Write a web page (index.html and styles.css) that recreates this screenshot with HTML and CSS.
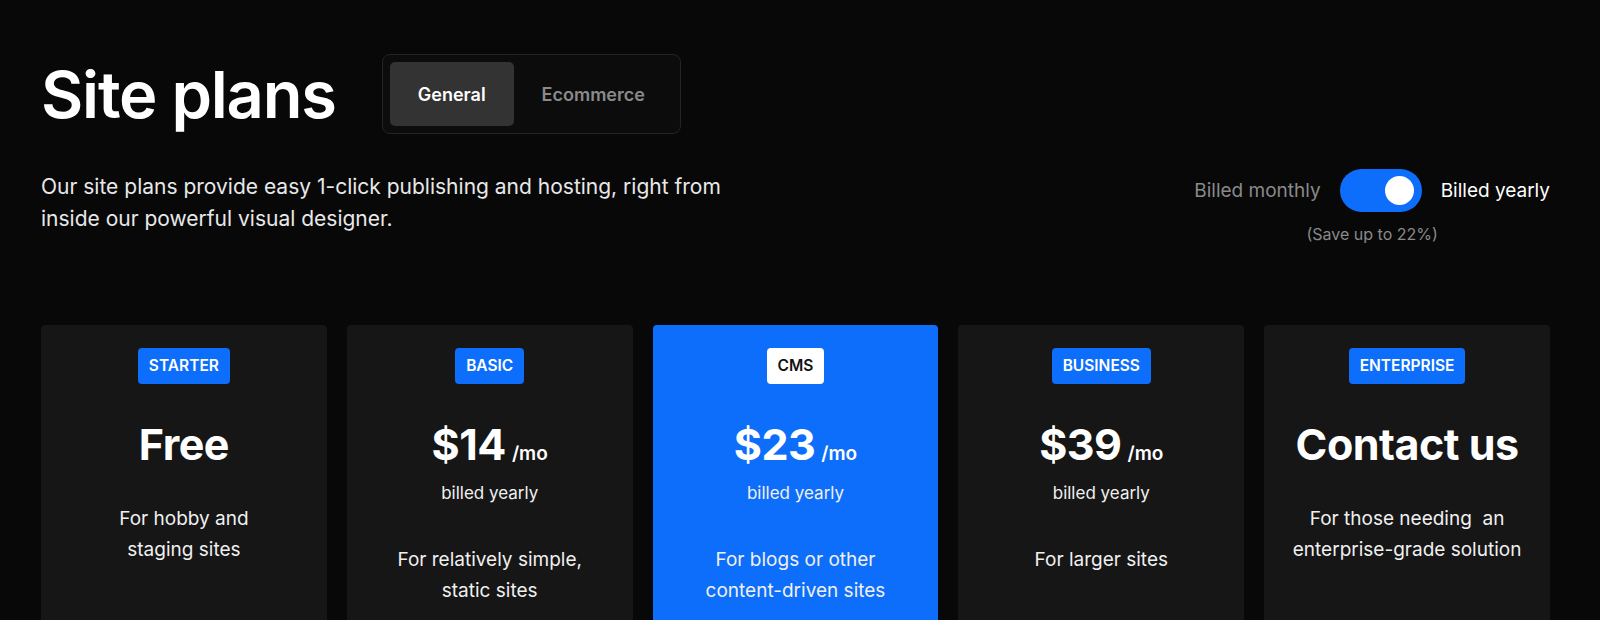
FILE: index.html
```html
<!DOCTYPE html>
<html lang="en">
<head>
<meta charset="utf-8">
<title>Site plans</title>
<link rel="stylesheet" href="styles.css">
</head>
<body>
<main class="page">
  <header class="top">
    <div class="top-left">
      <div class="title-row">
        <h1 class="title">Site plans</h1>
        <div class="tabs">
          <button class="tab tab-active">General</button>
          <button class="tab">Ecommerce</button>
        </div>
      </div>
      <p class="lead">Our site plans provide easy 1-click publishing and hosting, right from<br>inside our powerful visual designer.</p>
    </div>
    <div class="billing">
      <div class="billing-row">
        <span class="bill-off">Billed monthly</span>
        <span class="switch"><span class="knob"></span></span>
        <span class="bill-on">Billed yearly</span>
      </div>
      <div class="save">(Save up to 22%)</div>
    </div>
  </header>

  <section class="cards">
    <article class="card">
      <span class="badge">STARTER</span>
      <div class="price"><span class="amount">Free</span></div>
      <p class="desc">For hobby and<br>staging sites</p>
    </article>
    <article class="card">
      <span class="badge">BASIC</span>
      <div class="price"><span class="amount">$14</span><span class="per">/mo</span></div>
      <div class="billed">billed yearly</div>
      <p class="desc">For relatively simple,<br>static sites</p>
    </article>
    <article class="card card-featured">
      <span class="badge badge-light">CMS</span>
      <div class="price"><span class="amount">$23</span><span class="per">/mo</span></div>
      <div class="billed">billed yearly</div>
      <p class="desc">For blogs or other<br>content-driven sites</p>
    </article>
    <article class="card">
      <span class="badge">BUSINESS</span>
      <div class="price"><span class="amount">$39</span><span class="per">/mo</span></div>
      <div class="billed">billed yearly</div>
      <p class="desc">For larger sites</p>
    </article>
    <article class="card">
      <span class="badge">ENTERPRISE</span>
      <div class="price"><span class="amount">Contact us</span></div>
      <p class="desc">For those needing&nbsp; an<br>enterprise-grade solution</p>
    </article>
  </section>
</main>
</body>
</html>
```
FILE: styles.css
```css
* { box-sizing: border-box; }
html, body {
  margin: 0;
  padding: 0;
  background: #080808;
  height: 620px;
  overflow: hidden;
}
body {
  font-family: Inter, "Noto Sans", sans-serif;
  color: #ffffff;
}
.page {
  padding: 54px 50px 0 41px;
}
.top {
  display: flex;
  justify-content: space-between;
  align-items: flex-start;
}
.title-row {
  display: flex;
  align-items: center;
  gap: 46px;
}
.title {
  margin: 2px 0 0;
  font-size: 65px;
  font-weight: 600;
  letter-spacing: -1.2px;
  line-height: 78px;
}
.tabs {
  display: flex;
  padding: 7px;
  border: 1px solid #242424;
  border-radius: 8px;
  background: #0c0c0c;
}
.tab {
  font-family: Inter, sans-serif;
  font-size: 18px;
  font-weight: 600;
  height: 64px;
  padding: 0 28px;
  border: 0;
  border-radius: 5px;
  background: transparent;
  color: #8a8a8a;
}
.tab-active {
  background: #333333;
  color: #ffffff;
}
.lead {
  margin: 37px 0 0;
  font-size: 21px;
  line-height: 32px;
  color: #e8e8e8;
}
.billing {
  margin-top: 115px;
  display: flex;
  flex-direction: column;
  align-items: center;
}
.billing-row {
  display: flex;
  align-items: center;
  gap: 19px;
  font-size: 19px;
}
.bill-off { color: #8a8a8a; }
.bill-on { color: #ffffff; }
.switch {
  width: 82px;
  height: 43px;
  border-radius: 22px;
  background: #0d6efb;
  display: flex;
  align-items: center;
  justify-content: flex-end;
  padding-right: 8px;
}
.knob {
  width: 29px;
  height: 29px;
  border-radius: 50%;
  background: #ffffff;
}
.save {
  margin-top: 12px;
  font-size: 16px;
  line-height: 20px;
  color: #8a8a8a;
}
.cards {
  margin-top: 81px;
  display: grid;
  grid-template-columns: repeat(5, 1fr);
  gap: 20px;
}
.card {
  background: #161616;
  border-radius: 4px;
  height: 400px;
  padding-top: 23px;
  display: flex;
  flex-direction: column;
  align-items: center;
  text-align: center;
}
.card-featured { background: #0d6efb; }
.badge {
  display: inline-block;
  background: #0d6efb;
  color: #ffffff;
  font-size: 15.5px;
  font-weight: 600;
  line-height: 36px;
  padding: 0 11px;
  border-radius: 4px;
}
.badge-light {
  background: #ffffff;
  color: #111111;
}
.price {
  margin-top: 36px;
  display: flex;
  align-items: baseline;
  line-height: 48px;
}
.amount {
  font-size: 43px;
  font-weight: 700;
  letter-spacing: -0.5px;
}
.per {
  font-size: 19px;
  font-weight: 600;
  margin-left: 6px;
}
.billed {
  font-size: 17px;
  line-height: 24px;
  margin-top: 3px;
  color: #f0f0f0;
}
.desc {
  margin: 35px 0 0;
  font-size: 19px;
  line-height: 31px;
  color: #f0f0f0;
}
.billed + .desc { margin-top: 39px; }
```
